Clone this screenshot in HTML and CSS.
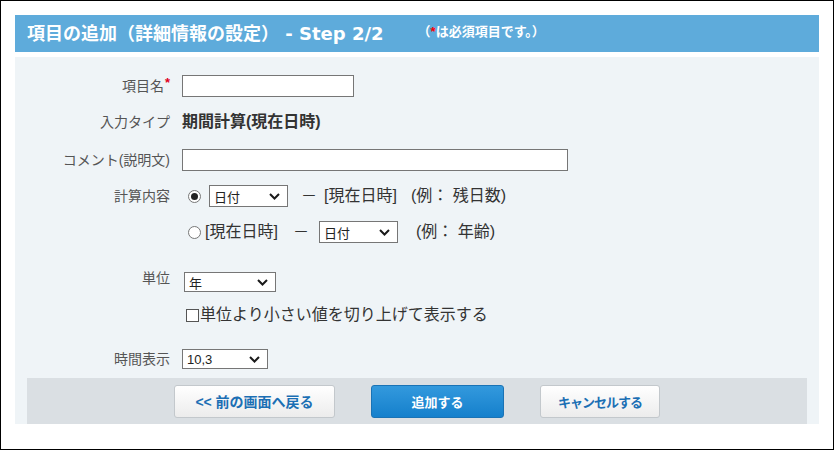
FILE: index.html
```html
<!DOCTYPE html>
<html lang="ja">
<head>
<meta charset="utf-8">
<title>項目の追加</title>
<link rel="stylesheet" href="styles.css">
</head>
<body>
<div class="frame">
  <div class="header">
    <span class="title">項目の追加（詳細情報の設定） - Step 2/2</span>
    <span class="note">（<span class="req">*</span>は必須項目です。）</span>
  </div>
  <div class="panel">
    <div class="row r1">
      <div class="label">項目名<span class="req-mark">*</span></div>
      <div class="field"><span class="input input-name"></span></div>
    </div>
    <div class="row r2">
      <div class="label">入力タイプ</div>
      <div class="field"><span class="value-bold">期間計算(現在日時)</span></div>
    </div>
    <div class="row r3">
      <div class="label">コメント(説明文)</div>
      <div class="field"><span class="input input-comment"></span></div>
    </div>
    <div class="row r4">
      <div class="label label-top">計算内容</div>
      <div class="field calc">
        <div class="calc-line">
          <span class="radio checked"></span>
          <span class="sel sel-date sel-first">日付<svg class="chev" viewBox="0 0 11 7" width="11" height="7"><path d="M1 1 L5.5 5.5 L10 1" fill="none" stroke="#1a1a1a" stroke-width="2"/></svg></span>
          <span class="txt minus1">－</span>
          <span class="txt now1">[現在日時]</span>
          <span class="txt ex1">(例： 残日数)</span>
        </div>
        <div class="calc-line">
          <span class="radio"></span>
          <span class="txt now2">[現在日時]</span>
          <span class="txt minus2">－</span>
          <span class="sel sel-date sel-second">日付<svg class="chev" viewBox="0 0 11 7" width="11" height="7"><path d="M1 1 L5.5 5.5 L10 1" fill="none" stroke="#1a1a1a" stroke-width="2"/></svg></span>
          <span class="txt ex2">(例： 年齢)</span>
        </div>
      </div>
    </div>
    <div class="row r5">
      <div class="label label-unit">単位</div>
      <div class="field"><span class="sel sel-unit">年<svg class="chev" viewBox="0 0 11 7" width="11" height="7"><path d="M1 1 L5.5 5.5 L10 1" fill="none" stroke="#1a1a1a" stroke-width="2"/></svg></span></div>
    </div>
    <div class="row r6">
      <div class="label"></div>
      <div class="field"><span class="check-line"><span class="checkbox"></span>単位より小さい値を切り上げて表示する</span></div>
    </div>
    <div class="row r7">
      <div class="label">時間表示</div>
      <div class="field"><span class="sel sel-time">10,3<svg class="chev" viewBox="0 0 11 7" width="11" height="7"><path d="M1 1 L5.5 5.5 L10 1" fill="none" stroke="#1a1a1a" stroke-width="2"/></svg></span></div>
    </div>
    <div class="footer">
      <span class="btn btn-back">&lt;&lt; 前の画面へ戻る</span>
      <span class="btn btn-primary">追加する</span>
      <span class="btn btn-cancel">キャンセルする</span>
    </div>
  </div>
</div>
</body>
</html>
```
FILE: styles.css
```css
* { box-sizing: border-box; }
html, body { margin: 0; padding: 0; background: #fff; }
body {
  font-family: "Liberation Sans", "Noto Sans CJK JP", sans-serif;
  color: #333;
}
.frame {
  width: 834px;
  height: 450px;
  border: 1px solid #000;
  padding: 14px 14px 0 14px;
  background: #fff;
}
.header {
  height: 37px;
  background: #5eabdb;
  display: flex;
  align-items: center;
  padding: 0 12px;
  color: #fff;
}
.title {
  font-family: "DejaVu Sans", "Noto Sans CJK JP", sans-serif;
  font-size: 18px;
  font-weight: bold;
  line-height: 1;
  white-space: nowrap;
}
.note {
  font-size: 13px;
  font-weight: bold;
  line-height: 1;
  margin-left: 34px;
  margin-bottom: 5px;
  white-space: nowrap;
}
.note .req { color: #f00; }
.panel {
  margin-top: 5px;
  background: #eff4f7;
  padding: 18px 12px 0 12px;
  display: flex;
  flex-direction: column;
}
.row {
  display: flex;
  align-items: center;
}
.label {
  width: 143px;
  flex: none;
  text-align: right;
  font-size: 14px;
  color: #555;
  line-height: 20px;
  white-space: nowrap;
}
.req-mark {
  color: #e0001a;
  font-size: 13px;
  font-weight: bold;
  position: relative;
  top: -4px;
  margin-left: 1px;
}
.field {
  margin-left: 12px;
  display: flex;
  align-items: center;
}
.input {
  display: block;
  height: 22px;
  background: #fff;
  border: 1px solid #767676;
}
.input-name { width: 172px; }
.input-comment { width: 386px; }
.r1 { height: 22px; }
.r2 { height: 22px; margin-top: 14px; }
.value-bold {
  font-size: 16px;
  font-weight: bold;
  color: #333;
  line-height: 22px;
  white-space: nowrap;
}
.r3 { height: 22px; margin-top: 16px; }
.r4 { margin-top: 13px; align-items: flex-start; }
.label-top { line-height: 24px; }
.calc {
  flex-direction: column;
  align-items: flex-start;
  gap: 12px;
}
.calc-line {
  height: 24px;
  display: flex;
  align-items: center;
  margin-left: 6px;
}
.txt {
  font-size: 16px;
  color: #333;
  white-space: nowrap;
  line-height: 24px;
}
.radio {
  width: 13px;
  height: 13px;
  border: 1px solid #777;
  border-radius: 50%;
  background: #fff;
  display: inline-flex;
  align-items: center;
  justify-content: center;
  flex: none;
}
.radio.checked::after {
  content: "";
  width: 7px;
  height: 7px;
  border-radius: 50%;
  background: #222;
}
.sel {
  display: inline-flex;
  align-items: center;
  justify-content: space-between;
  background: #fff;
  border: 1px solid #767676;
  font-size: 13px;
  color: #222;
  padding: 0 7px 0 4px;
  white-space: nowrap;
  flex: none;
}
.chev { display: block; flex: none; }
.sel-date { width: 79px; height: 22px; }
.sel-first { margin-left: 8px; }
.minus1 { margin-left: 13px; }
.now1 { margin-left: 7px; }
.ex1 { margin-left: 14px; }
.now2 { margin-left: 4px; }
.minus2 { margin-left: 15px; }
.sel-second { margin-left: 10px; }
.ex2 { margin-left: 18px; }
.r5 { margin-top: 28px; align-items: flex-start; }
.label-unit { line-height: 12px; }
.sel-unit { width: 92px; height: 20px; margin-left: 2px; }
.r6 { margin-top: 13px; height: 20px; }
.check-line {
  display: inline-flex;
  align-items: center;
  font-size: 16px;
  color: #333;
  margin-left: 4px;
  white-space: nowrap;
  line-height: 20px;
}
.checkbox {
  width: 13px;
  height: 13px;
  border: 1px solid #555;
  background: #fff;
  margin-right: 1px;
  flex: none;
}
.r7 { margin-top: 24px; height: 20px; }
.sel-time { width: 86px; height: 20px; }
.footer {
  margin-top: 9px;
  height: 46px;
  background: #dadfe3;
  display: flex;
  justify-content: center;
  align-items: center;
  gap: 36px;
}
.btn {
  display: inline-flex;
  align-items: center;
  justify-content: center;
  height: 33px;
  border: 1px solid #c3c8cc;
  border-radius: 3px;
  background: linear-gradient(#ffffff, #ececec);
  color: #1b6fb4;
  font-size: 13px;
  font-weight: bold;
  white-space: nowrap;
}
.btn-back { width: 161px; font-size: 14px; }
.btn-primary {
  width: 133px;
  background: linear-gradient(#3399dd, #1580cc);
  border-color: #1a73b5;
  color: #fff;
}
.btn-cancel { width: 120px; letter-spacing: -1px; }
```
